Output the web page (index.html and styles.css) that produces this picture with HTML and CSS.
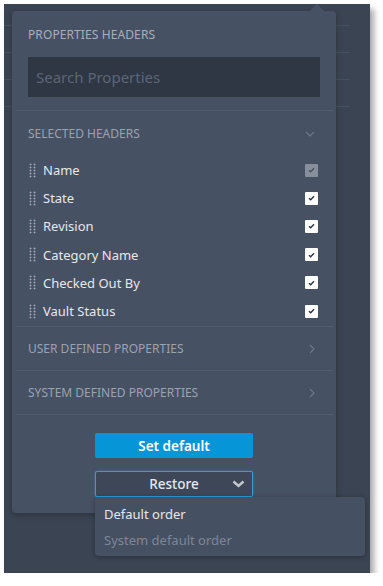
FILE: index.html
```html
<!DOCTYPE html>
<html>
<head>
<meta charset="utf-8">
<link rel="stylesheet" href="styles.css">
</head>
<body>
<div class="frame">
  <div class="table">
    <div class="trow"></div><div class="trow"></div><div class="trow"></div><div class="trow"></div>
  </div>
  <div class="panel">
    <div class="notch"></div>
    <div class="title">PROPERTIES HEADERS</div>
    <div class="search">Search Properties</div>
    <div class="divider"></div>
    <div class="sec-head"><span>SELECTED HEADERS</span>
      <svg class="chev" width="10" height="6" viewBox="0 0 10 6"><path d="M1 1 L5 5 L9 1" fill="none" stroke="#6f7888" stroke-width="1.1"/></svg>
    </div>
    <div class="rows">
      <div class="row"><span class="grip"></span><span class="label">Name</span><span class="cb disabled"><svg width="7" height="6" viewBox="0 0 7 6"><path d="M1 3.2 L2.7 4.8 L6 1.2" fill="none" stroke="#4d5566" stroke-width="1.4"/></svg></span></div>
      <div class="row"><span class="grip"></span><span class="label">State</span><span class="cb"><svg width="7" height="6" viewBox="0 0 7 6"><path d="M1 3.2 L2.7 4.8 L6 1.2" fill="none" stroke="#2c3340" stroke-width="1.4"/></svg></span></div>
      <div class="row"><span class="grip"></span><span class="label">Revision</span><span class="cb"><svg width="7" height="6" viewBox="0 0 7 6"><path d="M1 3.2 L2.7 4.8 L6 1.2" fill="none" stroke="#2c3340" stroke-width="1.4"/></svg></span></div>
      <div class="row"><span class="grip"></span><span class="label">Category Name</span><span class="cb"><svg width="7" height="6" viewBox="0 0 7 6"><path d="M1 3.2 L2.7 4.8 L6 1.2" fill="none" stroke="#2c3340" stroke-width="1.4"/></svg></span></div>
      <div class="row"><span class="grip"></span><span class="label">Checked Out By</span><span class="cb"><svg width="7" height="6" viewBox="0 0 7 6"><path d="M1 3.2 L2.7 4.8 L6 1.2" fill="none" stroke="#2c3340" stroke-width="1.4"/></svg></span></div>
      <div class="row"><span class="grip"></span><span class="label">Vault Status</span><span class="cb"><svg width="7" height="6" viewBox="0 0 7 6"><path d="M1 3.2 L2.7 4.8 L6 1.2" fill="none" stroke="#2c3340" stroke-width="1.4"/></svg></span></div>
    </div>
    <div class="divider"></div>
    <div class="sec-link"><span>USER DEFINED PROPERTIES</span>
      <svg class="chev" width="6" height="10" viewBox="0 0 6 10"><path d="M1 1 L5 5 L1 9" fill="none" stroke="#6f7888" stroke-width="1.1"/></svg>
    </div>
    <div class="divider"></div>
    <div class="sec-link"><span>SYSTEM DEFINED PROPERTIES</span>
      <svg class="chev" width="6" height="10" viewBox="0 0 6 10"><path d="M1 1 L5 5 L1 9" fill="none" stroke="#6f7888" stroke-width="1.1"/></svg>
    </div>
    <div class="divider"></div>
    <div class="actions">
      <div class="btn-primary">Set default</div>
      <div class="btn-restore"><span>Restore</span>
        <svg class="rchev" width="13" height="8" viewBox="0 0 13 8"><path d="M1.5 1.5 L6.5 6 L11.5 1.5" fill="none" stroke="#c3c8d0" stroke-width="2.4"/></svg>
      </div>
    </div>
  </div>
  <div class="menu">
    <div class="item">Default order</div>
    <div class="item muted">System default order</div>
  </div>
</div>
</body>
</html>
```
FILE: styles.css
```css
* { box-sizing: border-box; }
html, body { margin: 0; padding: 0; background: #ffffff; }
body { font-family: "Noto Sans", "Open Sans", sans-serif; }
.frame {
  position: relative;
  margin: 4px 0 0 4px;
  width: 366px;
  height: 569px;
  background: #3b4453;
  box-shadow: 4px 5px 6px rgba(0,0,0,0.35);
  overflow: visible;
}
.table { width: 346px; }
.trow { height: 27px; border-bottom: 1px solid #465062; }
.trow:first-child { height: 22px; }
.panel {
  position: absolute;
  left: 8px; top: 7px;
  width: 324px; height: 502px;
  background: #475164;
  border-radius: 4px;
  box-shadow: 0 2px 6px rgba(0,0,0,0.25);
  display: flex; flex-direction: column;
}
.notch {
  position: absolute;
  top: -7px; left: 298px;
  width: 0; height: 0;
  border-left: 7px solid transparent;
  border-right: 7px solid transparent;
  border-bottom: 7px solid #475164;
}
.title {
  height: 46px;
  padding-left: 16px;
  display: flex; align-items: center;
  font-size: 12px; color: #a7aebb; letter-spacing: 0.1px;
}
.search {
  margin: 0 16px;
  height: 40px;
  background: #2f3644;
  display: flex; align-items: center;
  padding-left: 8px;
  font-size: 15px; color: #5d6676;
}
.divider { height: 1px; background: #525c6f; margin: 0 3px 0 4px; flex-shrink: 0; }
.panel > .search + .divider { margin-top: 13px; }
.sec-head, .sec-link {
  display: flex; align-items: center; justify-content: space-between;
  padding: 0 21px 0 16px;
  font-size: 12px; color: #9aa2b0;
}
.sec-head { height: 45px; }
.sec-link { height: 43px; }
.rows { display: flex; flex-direction: column; padding-bottom: 1px; }
.row {
  height: 28.2px;
  display: flex; align-items: center;
  padding: 0 18px 0 17px;
}
.grip {
  width: 7px; height: 15px;
  background-image: radial-gradient(circle at 1.5px 1.5px, #a3aab6 0.85px, transparent 1.1px);
  background-size: 4px 3px;
  margin-right: 7px;
}
.label { flex: 1; font-size: 13px; color: #e4e7ec; }
.cb {
  width: 13px; height: 13px;
  background: #ffffff;
  display: flex; align-items: center; justify-content: center;
  border-radius: 1px;
}
.cb.disabled { background: #878f9d; }
.actions {
  display: flex; flex-direction: column; align-items: flex-start;
  padding: 18px 0 0 83px;
  gap: 13px;
}
.btn-primary {
  width: 158px; height: 25px;
  background: #0696d7;
  border-radius: 2px;
  display: flex; align-items: center; justify-content: center;
  color: #ffffff; font-size: 13.5px; font-weight: 600;
}
.btn-restore {
  position: relative;
  width: 158px; height: 26px;
  background: #3e4757;
  border: 1px solid #2a9fd8;
  box-shadow: 0 0 2px rgba(42,159,216,0.7);
  border-radius: 2px;
  display: flex; align-items: center; justify-content: center;
  color: #e4e7ec; font-size: 13.5px; font-weight: 500;
}
.rchev { position: absolute; right: 7px; top: 8px; }
.menu {
  position: absolute;
  left: 91px; top: 493px;
  width: 270px; height: 59px;
  background: #465063;
  border-radius: 4px;
  box-shadow: 0 1px 5px rgba(0,0,0,0.3);
  display: flex; flex-direction: column; justify-content: center;
  padding-left: 9px;
}
.item { height: 26px; display: flex; align-items: center; font-size: 13px; color: #e4e7ec; }
.item.muted { color: #7e8696; }
```
